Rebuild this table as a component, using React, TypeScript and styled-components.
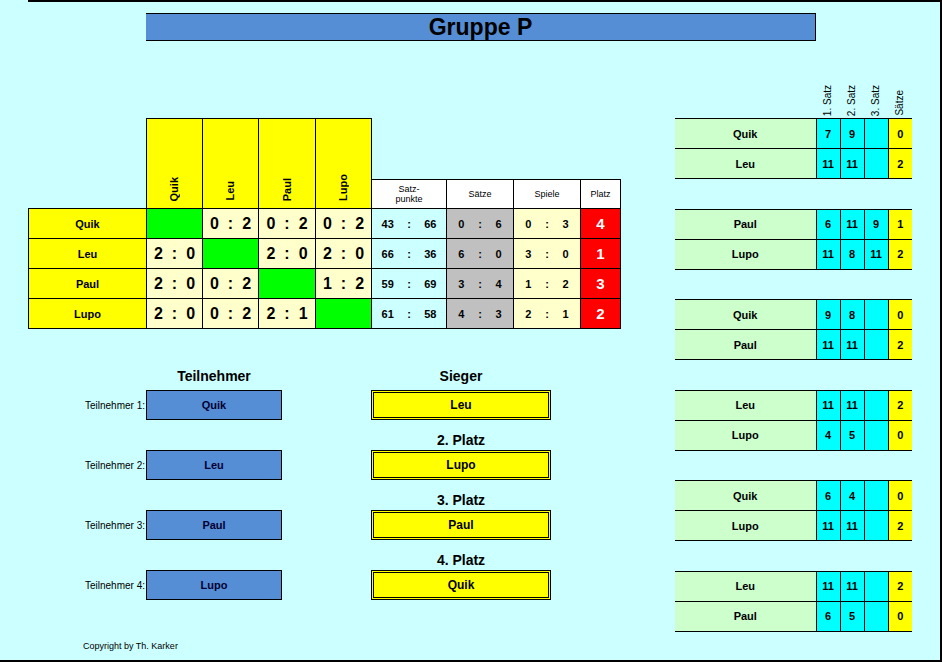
import styled, { createGlobalStyle } from 'styled-components'

const GlobalStyle = createGlobalStyle`
  html, body {
    margin: 0;
    padding: 0;
    background: #ccffff;
  }
  body {
    font-family: "Liberation Sans", Arial, sans-serif;
    color: #000;
  }
`

type Row = {
  name: string
  scores: (string | null)[]
  points: [number, number]
  sets: [number, number]
  games: [number, number]
  place: number
}

const players: Row[] = [
  { name: 'Quik', scores: [null, '0:2', '0:2', '0:2'], points: [43, 66], sets: [0, 6], games: [0, 3], place: 4 },
  { name: 'Leu', scores: ['2:0', null, '2:0', '2:0'], points: [66, 36], sets: [6, 0], games: [3, 0], place: 1 },
  { name: 'Paul', scores: ['2:0', '0:2', null, '1:2'], points: [59, 69], sets: [3, 4], games: [1, 2], place: 3 },
  { name: 'Lupo', scores: ['2:0', '0:2', '2:1', null], points: [61, 58], sets: [4, 3], games: [2, 1], place: 2 },
]

type Side = { name: string; sets: (number | null)[]; won: number }
const matches: [Side, Side][] = [
  [{ name: 'Quik', sets: [7, 9, null], won: 0 }, { name: 'Leu', sets: [11, 11, null], won: 2 }],
  [{ name: 'Paul', sets: [6, 11, 9], won: 1 }, { name: 'Lupo', sets: [11, 8, 11], won: 2 }],
  [{ name: 'Quik', sets: [9, 8, null], won: 0 }, { name: 'Paul', sets: [11, 11, null], won: 2 }],
  [{ name: 'Leu', sets: [11, 11, null], won: 2 }, { name: 'Lupo', sets: [4, 5, null], won: 0 }],
  [{ name: 'Quik', sets: [6, 4, null], won: 0 }, { name: 'Lupo', sets: [11, 11, null], won: 2 }],
  [{ name: 'Leu', sets: [11, 11, null], won: 2 }, { name: 'Paul', sets: [6, 5, null], won: 0 }],
]

const places = [
  { title: 'Sieger', name: 'Leu' },
  { title: '2. Platz', name: 'Lupo' },
  { title: '3. Platz', name: 'Paul' },
  { title: '4. Platz', name: 'Quik' },
]

const Page = styled.div`
  box-sizing: border-box;
  width: 942px;
  height: 662px;
  background: #ccffff;
  border-right: 2px solid #000;
  border-bottom: 2px solid #000;
  overflow: hidden;
`
const TopRule = styled.div`
  margin-left: 28px;
  border-top: 2px solid #000;
`
const Title = styled.h1`
  box-sizing: border-box;
  margin: 11px 0 0 146px;
  width: 670px;
  height: 28px;
  background: #558ed5;
  border: 1px solid #000;
  border-left: none;
  font-size: 23px;
  font-weight: bold;
  line-height: 26px;
  text-align: center;
`
const Body = styled.div`
  display: flex;
`
const LeftPane = styled.div`
  width: 675px;
  flex: none;
`
const RightPane = styled.div`
  width: 237px;
  padding-top: 37px;
  display: flex;
  flex-direction: column;
  gap: 29.5px;
`

/* ---------- result matrix ---------- */
const Matrix = styled.table`
  margin: 77px 0 0 28px;
  border-collapse: collapse;
  table-layout: fixed;
  width: 592px;
`
const Col = styled.col<{ $w: number }>`
  width: ${p => p.$w}px;
`
const HeadRow = styled.tr<{ $h: number }>`
  height: ${p => p.$h}px;
`
const Blank = styled.td`
  padding: 0;
  border: none;
`
const PlayerHead = styled.td`
  padding: 0 0 3px;
  background: #ffff00;
  border: 1px solid #000;
  text-align: center;
  vertical-align: bottom;
`
const Vertical = styled.span<{ $size: number; $bold?: boolean }>`
  display: inline-block;
  writing-mode: vertical-rl;
  transform: rotate(180deg);
  font-size: ${p => p.$size}px;
  font-weight: ${p => (p.$bold ? 'bold' : 'normal')};
  line-height: 1;
`
const RowHead = styled.td`
  padding: 0;
  background: #ffff00;
  border: 1px solid #000;
  text-align: center;
  font-size: 11px;
  font-weight: bold;
`
const ScoreCell = styled.td<{ $self: boolean }>`
  padding: 0;
  background: ${p => (p.$self ? '#00ff00' : '#ffffcc')};
  border: 1px solid #000;
`
const Score = styled.div`
  display: flex;
  justify-content: center;
  gap: 9px;
  font-size: 16px;
  font-weight: bold;
`
const StatHead = styled.td`
  padding: 0;
  background: #fff;
  border: 1px solid #000;
  text-align: center;
  font-size: 9px;
  line-height: 10px;
`
const StatCell = styled.td<{ $bg: string }>`
  padding: 0;
  background: ${p => p.$bg};
  border: 1px solid #000;
`
const Pair = styled.div`
  display: grid;
  grid-template-columns: repeat(3, 1fr);
  padding: 0 5px;
  text-align: center;
  font-size: 11px;
  font-weight: bold;
`
const PlaceCell = styled.td`
  padding: 0;
  background: #ff0000;
  border: 1px solid #000;
  color: #fff;
  text-align: center;
  font-size: 15px;
  font-weight: bold;
`

/* ---------- participants and ranking ---------- */
const Bottom = styled.div`
  display: flex;
  gap: 89px;
  margin: 31px 0 0 28px;
`
const Column = styled.div`
  display: flex;
  flex-direction: column;
`
const Heading = styled.div<{ $indent?: number; $lead?: boolean }>`
  box-sizing: border-box;
  display: flex;
  align-items: flex-end;
  justify-content: center;
  height: 30px;
  margin-left: ${p => p.$indent ?? 0}px;
  padding-bottom: ${p => (p.$lead ? 6 : 2)}px;
  font-size: 14px;
  font-weight: bold;
  line-height: 16px;
`
const EntryRow = styled.div`
  display: flex;
  align-items: center;
`
const EntryLabel = styled.span`
  width: 118px;
  padding-right: 1px;
  box-sizing: border-box;
  font-size: 10px;
  text-align: right;
`
const EntryBox = styled.div`
  box-sizing: border-box;
  width: 136px;
  height: 30px;
  background: #558ed5;
  border: 1px solid #000;
  color: #000033;
  font-size: 11px;
  font-weight: bold;
  line-height: 28px;
  text-align: center;
`
const PlaceBox = styled.div`
  box-sizing: border-box;
  width: 180px;
  height: 30px;
  background: #ffff00;
  border: 3px double #000;
  font-size: 12px;
  font-weight: bold;
  line-height: 24px;
  text-align: center;
`
const Copyright = styled.div`
  margin: 41px 0 0 83px;
  font-size: 9px;
  line-height: 11px;
`

/* ---------- match sheets ---------- */
const SetHeader = styled.div`
  display: grid;
  grid-template-columns: 141px repeat(4, 24px);
  height: 40px;
  margin-bottom: -29.5px;
`
const SetLabel = styled.div`
  display: flex;
  justify-content: center;
  align-items: flex-end;
  padding-bottom: 2px;
`
const MatchTable = styled.table`
  border-collapse: collapse;
  table-layout: fixed;
  width: 237px;
  border-top: 1px solid #000;
  border-bottom: 1px solid #000;
  tr + tr td {
    border-top: 1px solid #000;
  }
`
const MatchRow = styled.tr`
  height: 30px;
`
const NameCell = styled.td`
  padding: 0;
  background: #ccffcc;
  text-align: center;
  font-size: 11px;
  font-weight: bold;
`
const SetCell = styled.td<{ $sum?: boolean }>`
  padding: 0;
  background: ${p => (p.$sum ? '#ffff00' : '#00ffff')};
  border-left: 1px solid #000;
  text-align: center;
  font-size: 11px;
  font-weight: bold;
`

const ScorePair = ({ value }: { value: string }) => {
  const [a, b] = value.split(':')
  return (
    <Score>
      <span>{a}</span>
      <span>:</span>
      <span>{b}</span>
    </Score>
  )
}

const StatPair = ({ value }: { value: [number, number] }) => (
  <Pair>
    <span>{value[0]}</span>
    <span>:</span>
    <span>{value[1]}</span>
  </Pair>
)

const App = () => (
  <>
    <GlobalStyle />
    <Page>
      <TopRule />
      <Title>Gruppe P</Title>
      <Body>
        <LeftPane>
          <Matrix>
            <colgroup>
              <Col $w={118} />
              <Col $w={56} />
              <Col $w={56} />
              <Col $w={57} />
              <Col $w={56} />
              <Col $w={75} />
              <Col $w={67} />
              <Col $w={67} />
              <Col $w={40} />
            </colgroup>
            <tbody>
              <HeadRow $h={61}>
                <Blank rowSpan={2} />
                {players.map(p => (
                  <PlayerHead rowSpan={2} key={p.name}>
                    <Vertical $size={11} $bold>{p.name}</Vertical>
                  </PlayerHead>
                ))}
                <Blank colSpan={4} />
              </HeadRow>
              <HeadRow $h={29}>
                <StatHead>Satz-<br />punkte</StatHead>
                <StatHead>Sätze</StatHead>
                <StatHead>Spiele</StatHead>
                <StatHead>Platz</StatHead>
              </HeadRow>
              {players.map(p => (
                <HeadRow $h={30} key={p.name}>
                  <RowHead>{p.name}</RowHead>
                  {p.scores.map((s, i) => (
                    <ScoreCell $self={s === null} key={i}>
                      {s && <ScorePair value={s} />}
                    </ScoreCell>
                  ))}
                  <StatCell $bg="#ccffff"><StatPair value={p.points} /></StatCell>
                  <StatCell $bg="#c0c0c0"><StatPair value={p.sets} /></StatCell>
                  <StatCell $bg="#ffffcc"><StatPair value={p.games} /></StatCell>
                  <PlaceCell>{p.place}</PlaceCell>
                </HeadRow>
              ))}
            </tbody>
          </Matrix>

          <Bottom>
            <Column>
              {players.map((p, i) => (
                <div key={p.name}>
                  <Heading $indent={118} $lead>{i === 0 ? 'Teilnehmer' : ''}</Heading>
                  <EntryRow>
                    <EntryLabel>Teilnehmer {i + 1}:</EntryLabel>
                    <EntryBox>{p.name}</EntryBox>
                  </EntryRow>
                </div>
              ))}
            </Column>
            <Column>
              {places.map((pl, i) => (
                <div key={pl.title}>
                  <Heading $lead={i === 0}>{pl.title}</Heading>
                  <PlaceBox>{pl.name}</PlaceBox>
                </div>
              ))}
            </Column>
          </Bottom>
          <Copyright>Copyright by Th. Karker</Copyright>
        </LeftPane>

        <RightPane>
          <SetHeader>
            <span />
            {['1. Satz', '2. Satz', '3. Satz', 'Sätze'].map(l => (
              <SetLabel key={l}>
                <Vertical $size={10}>{l}</Vertical>
              </SetLabel>
            ))}
          </SetHeader>
          {matches.map((m, i) => (
            <MatchTable key={i}>
              <colgroup>
                <Col $w={141} />
                <Col $w={24} />
                <Col $w={24} />
                <Col $w={24} />
                <Col $w={24} />
              </colgroup>
              <tbody>
                {m.map(side => (
                  <MatchRow key={side.name}>
                    <NameCell>{side.name}</NameCell>
                    {side.sets.map((s, j) => (
                      <SetCell key={j}>{s ?? ''}</SetCell>
                    ))}
                    <SetCell $sum>{side.won}</SetCell>
                  </MatchRow>
                ))}
              </tbody>
            </MatchTable>
          ))}
        </RightPane>
      </Body>
    </Page>
  </>
)

export default App
